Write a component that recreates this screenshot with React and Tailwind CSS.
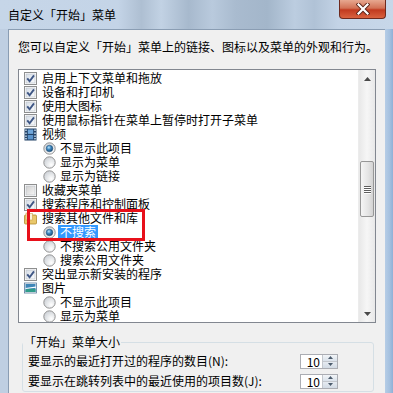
import React from 'react';

const rows = [
  { t: 'cb', c: true, s: '启用上下文菜单和拖放' },
  { t: 'cb', c: true, s: '设备和打印机' },
  { t: 'cb', c: true, s: '使用大图标' },
  { t: 'cb', c: true, s: '使用鼠标指针在菜单上暂停时打开子菜单' },
  { t: 'icon', i: 'video', s: '视频' },
  { t: 'rd', c: true, s: '不显示此项目' },
  { t: 'rd', c: false, s: '显示为菜单' },
  { t: 'rd', c: false, s: '显示为链接' },
  { t: 'cb', c: false, s: '收藏夹菜单' },
  { t: 'cb', c: true, s: '搜索程序和控制面板' },
  { t: 'icon', i: 'lib', s: '搜索其他文件和库' },
  { t: 'rd', c: true, s: '不搜索', sel: true },
  { t: 'rd', c: false, s: '不搜索公用文件夹' },
  { t: 'rd', c: false, s: '搜索公用文件夹' },
  { t: 'cb', c: true, s: '突出显示新安装的程序' },
  { t: 'icon', i: 'pic', s: '图片' },
  { t: 'rd', c: false, s: '不显示此项目' },
  { t: 'rd', c: false, s: '显示为菜单' },
];

const Defs = () => (
  <svg width="0" height="0" className="absolute">
    <defs>
      <linearGradient id="cbOn" x1="0" y1="0" x2="1" y2="1">
        <stop offset="0" stopColor="#d6dde6" />
        <stop offset="1" stopColor="#fbfcfd" />
      </linearGradient>
      <linearGradient id="cbOff" x1="0" y1="0" x2="1" y2="1">
        <stop offset="0" stopColor="#cfcfcf" />
        <stop offset="1" stopColor="#f7f7f7" />
      </linearGradient>
      <radialGradient id="rdBg" cx="0.65" cy="0.7" r="0.7">
        <stop offset="0" stopColor="#ffffff" />
        <stop offset="1" stopColor="#cfd3d8" />
      </radialGradient>
      <radialGradient id="rdDot" cx="0.4" cy="0.35" r="0.7">
        <stop offset="0" stopColor="#b9e4fb" />
        <stop offset="0.45" stopColor="#3d86bf" />
        <stop offset="1" stopColor="#16466f" />
      </radialGradient>
      <linearGradient id="thumb" x1="0" y1="0" x2="1" y2="0">
        <stop offset="0" stopColor="#f4f4f4" />
        <stop offset="1" stopColor="#d6d6d6" />
      </linearGradient>
    </defs>
  </svg>
);

const Check = ({ on }) => (
  <svg width="13" height="13" viewBox="0 0 13 13" className="shrink-0">
    <rect x="0.5" y="0.5" width="12" height="12" fill="#fff" stroke="#8e8f8f" />
    <rect x="2" y="2" width="9" height="9" fill={on ? 'url(#cbOn)' : 'url(#cbOff)'} stroke="#b8bec6" strokeWidth="0.6" />
    {on && <path d="M3.2 6.4 L5.6 9.2 L10 3.4" fill="none" stroke="#3f5785" strokeWidth="1.9" />}
  </svg>
);

const Radio = ({ on }) => (
  <svg width="13" height="13" viewBox="0 0 13 13" className="shrink-0">
    <circle cx="6.5" cy="6.5" r="5.7" fill="url(#rdBg)" stroke="#939393" strokeWidth="1" />
    {on && <circle cx="6.5" cy="6.5" r="3.3" fill="url(#rdDot)" stroke="#1d4d74" strokeWidth="0.5" />}
  </svg>
);

const Icon = ({ i }) => {
  if (i === 'video')
    return (
      <svg width="13" height="13" viewBox="0 0 13 13" className="shrink-0">
        <rect x="0.5" y="0.5" width="12" height="12" fill="#234266" />
        {[1.5, 4.5, 7.5, 10].map((y) => (
          <g key={y}>
            <rect x="1.2" y={y} width="1.6" height="1.4" fill="#c8dbee" />
            <rect x="10.2" y={y} width="1.6" height="1.4" fill="#c8dbee" />
          </g>
        ))}
        <rect x="3.8" y="1.5" width="5.4" height="4.4" fill="#6fa6da" />
        <rect x="3.8" y="7" width="5.4" height="4.4" fill="#5b94cc" />
      </svg>
    );
  if (i === 'lib')
    return (
      <svg width="13" height="13" viewBox="0 0 13 13" className="shrink-0">
        <rect x="0.5" y="3" width="12" height="9" rx="1" fill="#e9c86b" stroke="#b38b2f" strokeWidth="0.8" />
        <rect x="2" y="1" width="3" height="7" fill="#f6e7b7" stroke="#c9a24a" strokeWidth="0.6" />
        <rect x="5.5" y="1.5" width="3" height="6.5" fill="#fbf3d9" stroke="#c9a24a" strokeWidth="0.6" />
      </svg>
    );
  return (
    <svg width="13" height="12" viewBox="0 0 13 12" className="shrink-0">
      <rect x="0.5" y="1" width="12" height="10" fill="#fff" stroke="#56789a" strokeWidth="0.8" />
      <rect x="1.5" y="2" width="10" height="8" fill="#3f86b8" />
      <path d="M1.5 6.5 L12 5.2" stroke="#ffffff" strokeWidth="1.2" />
      <path d="M1.5 10 L1.5 7.6 Q5 6.4 11.5 7 L11.5 10 Z" fill="#2f9c8a" />
    </svg>
  );
};

const Spinner = () => (
  <div className="flex h-[15px] w-[38px] border border-[#abadb3] bg-white">
    <div className="flex-1 pr-[2px] text-right text-[12px] leading-[13px]">10</div>
    <div className="flex w-[15px] flex-col border-l border-[#c3c7cd]">
      <div className="flex flex-1 items-center justify-center border-b border-[#c3c7cd] bg-[linear-gradient(#f2f5f8,#d9e1ea)]">
        <svg width="5" height="3" viewBox="0 0 5 3"><path d="M0 3 L2.5 0 L5 3 Z" fill="#4b5b6c" /></svg>
      </div>
      <div className="flex flex-1 items-center justify-center bg-[linear-gradient(#e6ebf1,#d1dae4)]">
        <svg width="5" height="3" viewBox="0 0 5 3"><path d="M0 0 L2.5 3 L5 0 Z" fill="#4b5b6c" /></svg>
      </div>
    </div>
  </div>
);

export default function App() {
  return (
    <div className="relative flex h-[393px] w-[393px] flex-col overflow-hidden bg-[#c1d2e6] font-['Noto_Sans_CJK_SC',sans-serif] text-[12px] text-black">
      <Defs />

      {/* title bar */}
      <div className="flex h-[29px] shrink-0 items-center bg-[linear-gradient(90deg,#c6d6e8_0%,#c4d4e7_30%,#aebfd2_36%,#c2d2e4_41%,#a7b9cd_48%,#b9cadd_54%,#a9bbcf_60%,#a3b6ca_68%,#bccde0_75%,#b0c2d6_80%,#c3d3e6_86%,#c7d7e9_100%)] pl-[8px] pt-[1px]">
        <span className="leading-[14px]">自定义「开始」菜单</span>
      </div>
      <div className="absolute right-[7px] top-0 flex h-[19px] w-[47px] items-center justify-center rounded-b-[4px] border border-t-0 border-[#6e2a1e] bg-[linear-gradient(#e7a890,#d27256_45%,#c13a1f_55%,#d9623f)]">
        <svg width="14" height="12" viewBox="0 0 14 12">
          <path d="M2.5 1.5 L11.5 10.5 M11.5 1.5 L2.5 10.5" stroke="#5a2418" strokeWidth="4" strokeLinecap="square" />
          <path d="M2.5 1.5 L11.5 10.5 M11.5 1.5 L2.5 10.5" stroke="#ffffff" strokeWidth="2.2" strokeLinecap="square" />
        </svg>
      </div>

      <div className="flex flex-1">
        <div className="w-[8px] bg-[#bfcfe2]" />

        {/* client area */}
        <div className="flex w-[377px] flex-col border-l border-t border-[#8a9db3] bg-[#f0f0f0]">
          <div className="whitespace-nowrap pl-[9px] pt-[10px] leading-[14px]">
            您可以自定义「开始」菜单上的链接、图标以及菜单的外观和行为。
          </div>

          {/* list box */}
          <div className="ml-[9px] mt-[15px] flex h-[254px] w-[358px] shrink-0 border border-[#828790] bg-white">
            <div className="flex-1 overflow-hidden pt-[1px]">
              {rows.map((r, k) => (
                <div key={k} className="flex h-[14px] items-center whitespace-nowrap leading-[14px]">
                  {r.t === 'rd' ? (
                    <div className={`flex items-center pl-[24px] ${r.sel ? 'gap-[2px]' : 'gap-[4px]'}`}>
                      <Radio on={r.c} />
                      {r.sel ? (
                        <span className="bg-[#3399ff] px-[2px] text-white">{r.s}</span>
                      ) : (
                        <span>{r.s}</span>
                      )}
                    </div>
                  ) : (
                    <div className="flex items-center gap-[5px] pl-[5px]">
                      {r.t === 'cb' ? <Check on={r.c} /> : <Icon i={r.i} />}
                      <span>{r.s}</span>
                    </div>
                  )}
                </div>
              ))}
            </div>

            {/* scrollbar */}
            <div className="flex w-[17px] flex-col border-l border-[#ececec] bg-[linear-gradient(90deg,#e8e8e8,#f6f6f6_50%,#e8e8e8)]">
              <div className="flex h-[17px] items-center justify-center">
                <svg width="7" height="4" viewBox="0 0 7 4"><path d="M0 4 L3.5 0 L7 4 Z" fill="#4a4a4a" /></svg>
              </div>
              <div className="h-[74px]" />
              <div className="mx-[1px] flex h-[56px] flex-col items-center justify-center gap-[1px] rounded-[2px] border border-[#979797] bg-[linear-gradient(90deg,#f5f5f5,#e4e4e4_60%,#d3d3d3)]">
                {[0, 1, 2, 3].map((n) => (
                  <div key={n} className="h-[1px] w-[7px] bg-[#5e5e5e] shadow-[0_1px_0_#ffffff]" />
                ))}
              </div>
              <div className="flex-1" />
              <div className="flex h-[17px] items-center justify-center">
                <svg width="7" height="4" viewBox="0 0 7 4"><path d="M0 0 L3.5 4 L7 0 Z" fill="#4a4a4a" /></svg>
              </div>
            </div>
          </div>

          {/* group box */}
          <fieldset className="ml-[13px] mt-[12px] w-[352px] rounded-[3px] border border-[#d5dfe5] px-[5px] pt-[2px]">
            <legend className="ml-[-5px] px-[1px] leading-[14px]">「开始」菜单大小</legend>
            <div className="flex h-[20px] items-center justify-between pr-[30px]">
              <span className="leading-[14px]">要显示的最近打开过的程序的数目(N):</span>
              <Spinner />
            </div>
            <div className="flex h-[20px] items-center justify-between pr-[30px]">
              <span className="leading-[14px]">要显示在跳转列表中的最近使用的项目数(J):</span>
              <Spinner />
            </div>
          </fieldset>
        </div>

        <div className="w-[8px] bg-[linear-gradient(90deg,#b6cde6,#a4c0df_60%,#8fb0d6)]" />
      </div>

      {/* red highlight frame */}
      <div className="absolute left-[27px] top-[209px] h-[32px] w-[118px] border-[3px] border-[#e8101a]" />
    </div>
  );
}
